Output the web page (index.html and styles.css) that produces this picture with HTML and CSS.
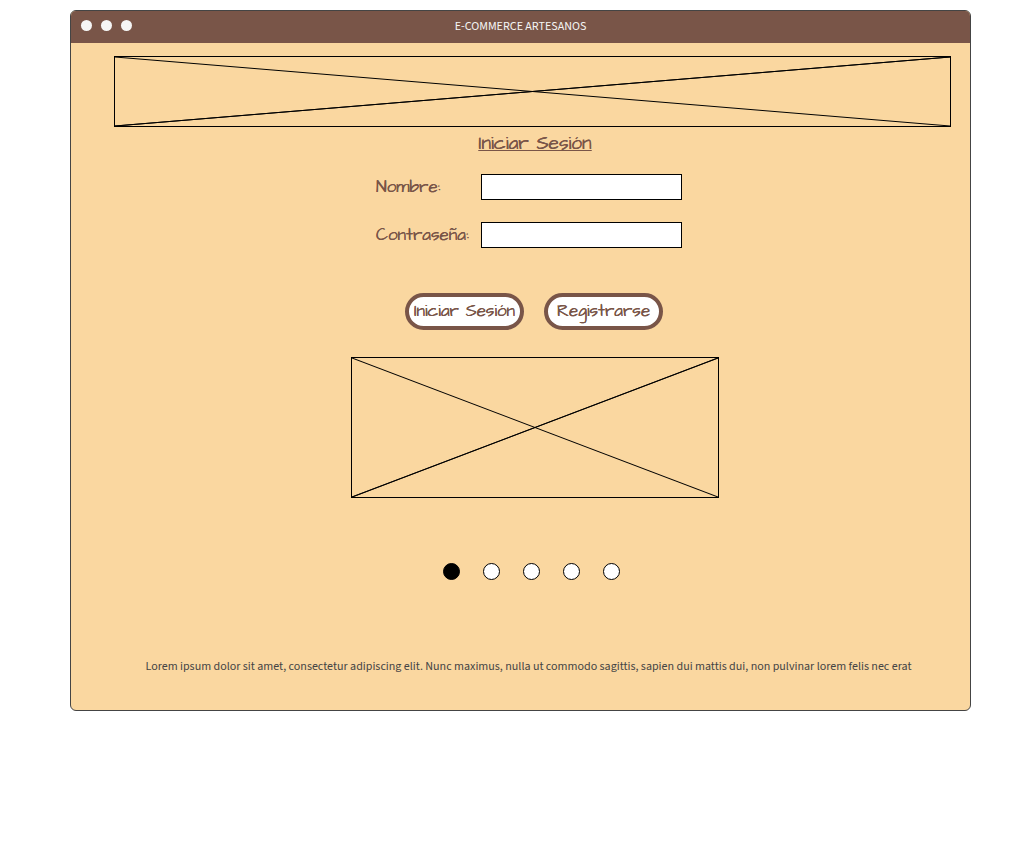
FILE: index.html
```html
<!DOCTYPE html>
<html lang="es">
<head>
  <meta charset="utf-8">
  <meta name="viewport" content="width=device-width, initial-scale=1">
  <title>E-commerce Artesanos</title>
  <link rel="stylesheet" href="styles.css">
</head>
<body>
  <div class="window">
    <header class="titlebar">
      <div class="lights" aria-hidden="true"><span class="light"></span><span class="light"></span><span class="light"></span></div>
      <span class="titlebar-text">E-COMMERCE ARTESANOS</span>
    </header>
    <main class="content">
      <svg class="placeholder banner" viewBox="0 0 100 100" preserveAspectRatio="none" aria-hidden="true">
        <path d="M0 0L100 100"/>
        <path d="M0 100L100 0"/>
        <path d="M0 100L100 0"/>
      </svg>
      <h1 class="heading">Iniciar Sesión</h1>
      <form class="login">
        <div class="fields">
          <label class="label" for="nombre">Nombre:</label>
          <input class="input" id="nombre" type="text">
          <label class="label" for="clave">Contraseña:</label>
          <input class="input" id="clave" type="password">
        </div>
        <div class="actions">
          <button class="button" type="submit">Iniciar Sesión</button>
          <button class="button" type="button">Registrarse</button>
        </div>
      </form>
      <svg class="placeholder slide" viewBox="0 0 100 100" preserveAspectRatio="none" aria-hidden="true">
        <path d="M0 0L100 100"/>
        <path d="M0 100L100 0"/>
        <path d="M0 100L100 0"/>
      </svg>
      <nav class="dots" aria-label="Carrusel">
        <button class="dot dot-active" type="button" aria-label="1"></button>
        <button class="dot" type="button" aria-label="2"></button>
        <button class="dot" type="button" aria-label="3"></button>
        <button class="dot" type="button" aria-label="4"></button>
        <button class="dot" type="button" aria-label="5"></button>
      </nav>
      <p class="note">Lorem ipsum dolor sit amet, consectetur adipiscing elit. Nunc maximus, nulla ut commodo sagittis, sapien dui mattis dui, non pulvinar lorem felis nec erat</p>
    </main>
  </div>
</body>
</html>
```

FILE: styles.css
```css
:root {
  --brown: #795548;
  --sand: #fad7a0;
  --line: #444444;
  --hand: "Architects Daughter", "Open Sans", sans-serif;
  --sans: "Source Sans 3", "Noto Sans CJK SC", sans-serif;
}

* {
  box-sizing: border-box;
}

body {
  margin: 0;
  padding: 10px 49px 10px 70px;
  background: #ffffff;
  font-family: var(--sans);
}

.window {
  border: 1px solid var(--line);
  border-radius: 6px;
  background: var(--sand);
  overflow: hidden;
}

.titlebar {
  display: grid;
  grid-template-columns: 1fr auto 1fr;
  align-items: center;
  height: 32px;
  padding: 0 10px;
  background: var(--brown);
}

.lights {
  display: flex;
  gap: 9px;
  padding-bottom: 4px;
}

.light {
  width: 11px;
  height: 11px;
  border-radius: 50%;
  background: #f5f5f5;
}

.titlebar-text {
  color: #f5f5f5;
  font-size: 12px;
  line-height: 16px;
}

.content {
  display: flex;
  flex-direction: column;
  align-items: center;
  padding: 13px 19px 35px 43px;
}

.placeholder {
  display: block;
  max-width: 100%;
  border: 1px solid #000000;
}

.placeholder path {
  fill: none;
  stroke: #000000;
  stroke-width: 1px;
  vector-effect: non-scaling-stroke;
}

.banner {
  width: 100%;
  height: 71px;
}

.heading,
.label,
.button {
  color: var(--brown);
  font-family: var(--hand);
  font-weight: 400;
  line-height: 24px;
  text-shadow: 0 0 0 var(--brown);
}

.heading {
  margin: 0;
  padding: 5px 0 18px 5px;
  font-size: 19px;
  text-decoration: underline 1px;
}

.login {
  display: flex;
  flex-direction: column;
  align-items: center;
  gap: 45px;
}

.fields {
  display: grid;
  grid-template-columns: 94px 201px;
  gap: 22px 12px;
  align-items: center;
  padding-right: 8px;
}

.label {
  padding: 0 0 1px 1px;
  font-size: 17px;
}

.input {
  width: 100%;
  height: 26px;
  padding: 0 6px;
  border: 1px solid #000000;
  border-radius: 0;
  background: #ffffff;
  font: 14px/20px var(--sans);
}

.actions {
  display: flex;
  gap: 20px;
  padding-left: 3px;
}

.button {
  width: 119px;
  height: 37px;
  padding: 0 0 2px;
  border: 4px solid var(--brown);
  border-radius: 19px;
  background: #ffffff;
  font-size: 17px;
  white-space: nowrap;
}

.slide {
  width: 368px;
  height: 141px;
  margin: 27px 0 0 5px;
}

.dots {
  display: flex;
  gap: 23px;
  margin-top: 65px;
  padding-right: 2px;
}

.dot {
  width: 17px;
  height: 17px;
  padding: 0;
  border: 1px solid #000000;
  border-radius: 50%;
  background: #ffffff;
}

.dot-active {
  background: #000000;
}

.note {
  margin: 79px 0 0;
  padding-right: 8px;
  color: var(--line);
  font-size: 12px;
  line-height: 16px;
  text-align: center;
}
```
